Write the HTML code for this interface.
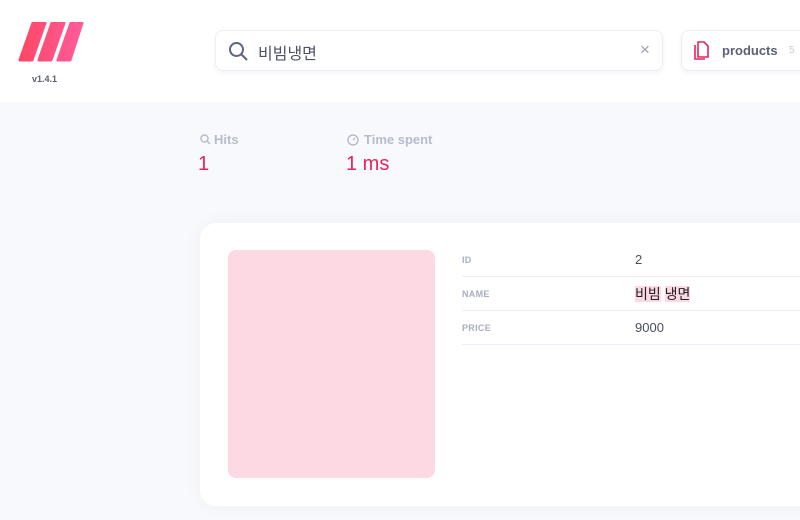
<!DOCTYPE html>
<html><head><meta charset="utf-8"><style>
*{margin:0;padding:0;box-sizing:border-box}
body{width:800px;height:520px;overflow:hidden;background:#f8f9fc;font-family:"Liberation Sans","Noto Sans CJK KR",sans-serif;position:relative}
.hdr{position:absolute;left:0;top:0;width:800px;height:102px;background:#fff}
.abs{position:absolute}
.search{left:215px;top:30px;width:448px;height:41px;border:1px solid #eceef5;border-radius:8px;background:#fff;box-shadow:0 2px 6px rgba(30,40,90,.05)}
.prod{left:681px;top:30px;width:140px;height:41px;border:1px solid #eceef5;border-radius:8px;background:#fff;box-shadow:0 2px 6px rgba(30,40,90,.05)}
.lbl{font-size:13px;font-weight:bold;color:#b7bccd}
.val{font-size:20px;color:#e8245c}
.card{left:200px;top:223px;width:640px;height:283px;background:#fff;border-radius:16px;box-shadow:0 0 20px rgba(30,40,90,.04)}
.img{left:228px;top:250px;width:207px;height:228px;background:#fdd9e4;border-radius:8px}
.row{position:absolute;left:462px;width:360px;height:34px;border-bottom:1px solid #eceef5}
.row .k{position:absolute;left:0;top:12px;font-size:9px;font-weight:bold;color:#a9afc2;letter-spacing:.3px}
.row .v{position:absolute;left:173px;top:9px;font-size:13px;color:#4a4f60}
</style></head><body>
<div class="hdr"></div>
<svg class="abs" style="left:18px;top:22px" width="66" height="40" viewBox="0 0 66 40">
<defs><linearGradient id="g" x1="0" x2="1"><stop offset="0" stop-color="#ff4765"/><stop offset="1" stop-color="#ff5c9a"/></linearGradient></defs>
<path d="M15 1h12L14 38H2z M34 1h12L33 38H21z M53 1h11L52 38H40z" fill="url(#g)" stroke="url(#g)" stroke-linejoin="round" stroke-width="3"/>
</svg>
<div class="abs" style="left:32px;top:74px;font-size:9px;font-weight:bold;color:#5a6070">v1.4.1</div>
<div class="abs search">
<svg class="abs" style="left:12px;top:10px" width="20" height="20" viewBox="0 0 20 20" fill="none" stroke="#5d6680" stroke-width="2"><circle cx="8.5" cy="8.5" r="6.5"/><path d="M13.5 13.5l5 5" stroke-linecap="round"/></svg>
<div class="abs" style="left:42px;top:9px;font-size:16px;color:#4b5266">비빔냉면</div>
<div class="abs" style="left:424px;top:9px;font-size:17px;color:#9aa0b5">×</div>
</div>
<div class="abs prod">
<svg class="abs" style="left:10px;top:10px" width="18" height="20" viewBox="0 0 18 20" fill="none" stroke="#e8245c" stroke-width="1.6"><path d="M6 1h6l4 4v11H6z"/><path d="M3 4v14h10"/></svg>
<div class="abs" style="left:40px;top:12px;font-size:13px;font-weight:bold;color:#5a6178">products</div>
<div class="abs" style="left:107px;top:14px;font-size:10px;color:#c5c9d6">5</div>
</div>
<svg class="abs" style="left:200px;top:134px" width="11" height="11" viewBox="0 0 11 11" fill="none" stroke="#b7bccd" stroke-width="1.5"><circle cx="4.5" cy="4.5" r="3.5"/><path d="M7 7l3 3"/></svg>
<div class="abs lbl" style="left:214px;top:132px">Hits</div>
<div class="abs val" style="left:198px;top:153px">1</div>
<svg class="abs" style="left:347px;top:134px" width="12" height="12" viewBox="0 0 12 12" fill="none" stroke="#b7bccd" stroke-width="1.4"><circle cx="6" cy="6" r="5"/><path d="M6 6l2-2"/></svg>
<div class="abs lbl" style="left:364px;top:132px">Time spent</div>
<div class="abs val" style="left:346px;top:153px">1 ms</div>
<div class="abs card"></div>
<div class="abs img"></div>
<div class="row" style="top:243px"><span class="k">ID</span><span class="v">2</span></div>
<div class="row" style="top:277px"><span class="k">NAME</span><span class="v" style="color:#222;font-size:14px;top:7px"><span style="background:#fdd9e4">비빔</span> <span style="background:#fdd9e4">냉면</span></span></div>
<div class="row" style="top:311px"><span class="k">PRICE</span><span class="v">9000</span></div>
</body></html>
